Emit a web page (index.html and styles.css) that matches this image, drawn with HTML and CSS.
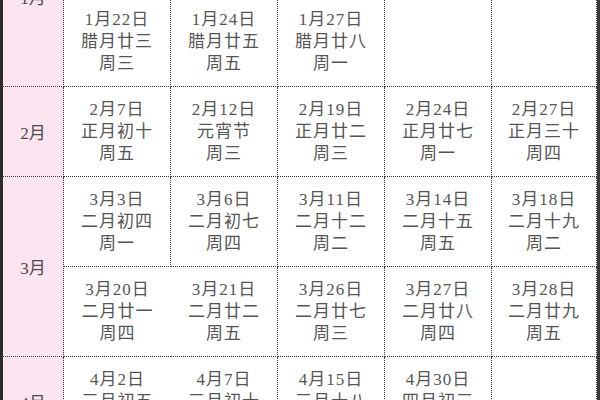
FILE: index.html
```html
<!DOCTYPE html>
<html lang="zh-CN">
<head>
<meta charset="utf-8">
<title>2025 日期表</title>
<link rel="stylesheet" href="styles.css">
</head>
<body>
<div class="sheet">
  <div class="month m1">1月</div>
  <div class="cell"><span>1月6日</span><span>腊月初七</span><span>周一</span></div>
  <div class="cell"><span>1月10日</span><span>腊月十一</span><span>周五</span></div>
  <div class="cell"><span>1月15日</span><span>腊月十六</span><span>周三</span></div>
  <div class="cell"><span>1月17日</span><span>腊月十八</span><span>周五</span></div>
  <div class="cell"><span>1月20日</span><span>腊月廿一</span><span>周一</span></div>

  <div class="cell"><span>1月22日</span><span>腊月廿三</span><span>周三</span></div>
  <div class="cell"><span>1月24日</span><span>腊月廿五</span><span>周五</span></div>
  <div class="cell"><span>1月27日</span><span>腊月廿八</span><span>周一</span></div>
  <div class="cell"></div>
  <div class="cell"></div>

  <div class="month">2月</div>
  <div class="cell"><span>2月7日</span><span>正月初十</span><span>周五</span></div>
  <div class="cell"><span>2月12日</span><span>元宵节</span><span>周三</span></div>
  <div class="cell"><span>2月19日</span><span>正月廿二</span><span>周三</span></div>
  <div class="cell"><span>2月24日</span><span>正月廿七</span><span>周一</span></div>
  <div class="cell"><span>2月27日</span><span>正月三十</span><span>周四</span></div>

  <div class="month m2">3月</div>
  <div class="cell"><span>3月3日</span><span>二月初四</span><span>周一</span></div>
  <div class="cell"><span>3月6日</span><span>二月初七</span><span>周四</span></div>
  <div class="cell"><span>3月11日</span><span>二月十二</span><span>周二</span></div>
  <div class="cell"><span>3月14日</span><span>二月十五</span><span>周五</span></div>
  <div class="cell"><span>3月18日</span><span>二月十九</span><span>周二</span></div>

  <div class="cell"><span>3月20日</span><span>二月廿一</span><span>周四</span></div>
  <div class="cell"><span>3月21日</span><span>二月廿二</span><span>周五</span></div>
  <div class="cell"><span>3月26日</span><span>二月廿七</span><span>周三</span></div>
  <div class="cell"><span>3月27日</span><span>二月廿八</span><span>周四</span></div>
  <div class="cell"><span>3月28日</span><span>二月廿九</span><span>周五</span></div>

  <div class="month">4月</div>
  <div class="cell"><span>4月2日</span><span>三月初五</span><span>周三</span></div>
  <div class="cell"><span>4月7日</span><span>三月初十</span><span>周一</span></div>
  <div class="cell"><span>4月15日</span><span>三月十八</span><span>周二</span></div>
  <div class="cell"><span>4月30日</span><span>四月初三</span><span>周三</span></div>
  <div class="cell"></div>
</div>
</body>
</html>
```

FILE: styles.css
```css
html, body {
  margin: 0;
  padding: 0;
  background: #ffffff;
  overflow: hidden;
}

.sheet {
  width: 600px;
  box-sizing: border-box;
  margin-top: -93px;
  display: grid;
  grid-template-columns: 61px 107px 107px 107px 107px 105px;
  grid-auto-rows: 90px;
  border-left: 3px solid #2a2a2a;
  border-right: 3px solid #3a3a3a;
  font-family: "Liberation Serif", "Noto Sans CJK SC", serif;
  font-size: 17px;
  font-weight: 400;
  color: #555555;
}

.month,
.cell {
  box-sizing: border-box;
  border-bottom: 1px dotted #3c3c3c;
  border-right: 1px dotted #3c3c3c;
  display: flex;
  flex-direction: column;
  align-items: center;
  justify-content: center;
}

.cell:nth-child(6n) {
  border-right: none;
}

.month {
  background: #fde4f1;
  color: #4a4a4a;
}

.m1,
.m2 {
  grid-row: span 2;
}

.cell span {
  display: block;
  line-height: 22px;
  letter-spacing: 1px;
  white-space: nowrap;
}
```
